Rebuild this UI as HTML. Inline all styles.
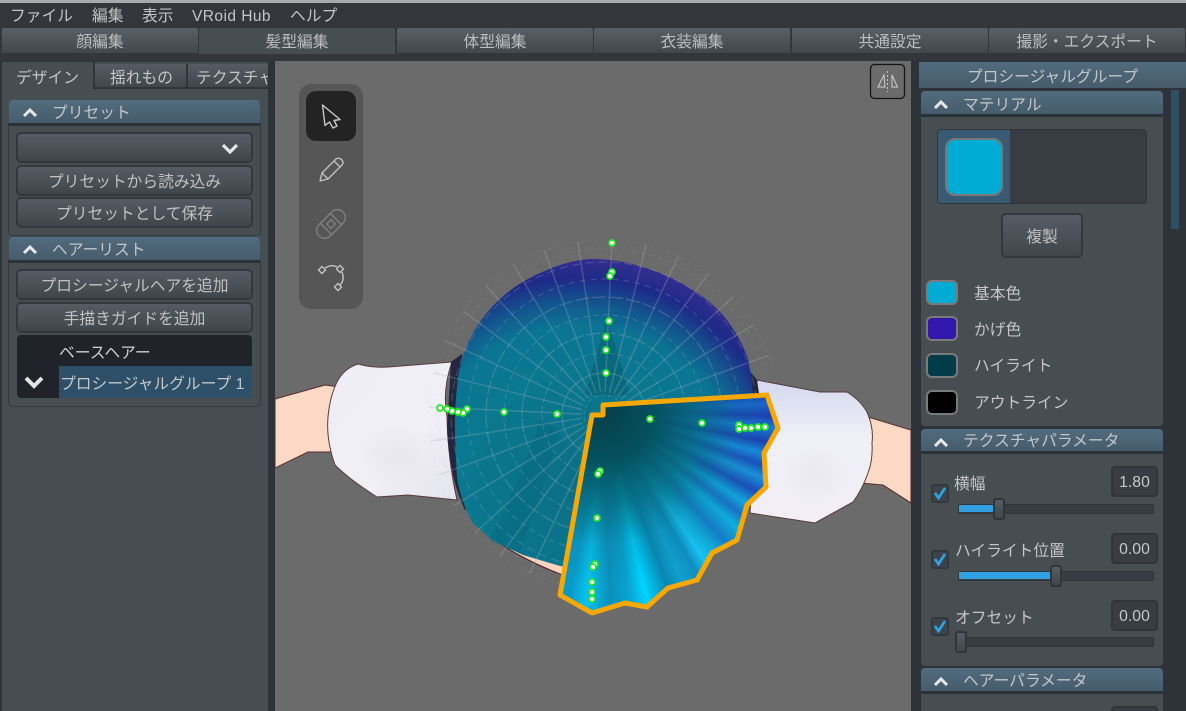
<!DOCTYPE html>
<html lang="ja"><head><meta charset="utf-8"><title>VRoid</title>
<style>
html,body{margin:0;padding:0;width:1186px;height:711px;overflow:hidden;background:#2d3338}
body{position:relative;font-family:"Liberation Sans","Noto Sans CJK JP",sans-serif;font-size:15.75px;color:#c4c6c7}
.a{position:absolute;box-sizing:border-box}
.t{position:absolute;white-space:nowrap;line-height:22px;height:22px}
.c{text-align:center}
.tab{position:absolute;top:28px;height:25px;background:linear-gradient(#585f66,#41474c);text-align:center;line-height:30px;border-radius:2px 2px 0 0;color:#bcbfc1}
.btn{position:absolute;box-sizing:border-box;background:linear-gradient(#555c64,#3f464b);border:2px solid #32383d;border-radius:5px;text-align:center;color:#c0c2c3;line-height:31px}
.hd{position:absolute;box-sizing:border-box;background:linear-gradient(#516c7e,#465c6c);border-bottom:3px solid #2c3338;border-radius:4px 4px 0 0;line-height:22px;height:26px}
.sec{position:absolute;box-sizing:border-box;background:#474e52;border:1px solid #33393e;border-radius:0 0 5px 5px}
.sw{position:absolute;left:926px;width:32px;height:25px;box-sizing:border-box;border:2px solid #7a7a7a;border-radius:6px}
.cb{position:absolute;left:931px;width:18px;height:19px;box-sizing:border-box;background:#3d434a;border:2px solid #32383d;border-radius:3px}
.inp{position:absolute;left:1111px;width:47px;height:31px;box-sizing:border-box;background:#383c43;border:2px solid #30353a;border-radius:4px;text-align:center;line-height:30px;color:#c8c9ca;font-size:15.75px}
.tr{position:absolute;left:958px;width:196px;height:10px;box-sizing:border-box;background:#383c43;border:1px solid #30353a;border-radius:2px}
.fl{position:absolute;left:959px;height:7px;background:#32a1e2}
.hn{position:absolute;width:12px;height:22px;box-sizing:border-box;background:linear-gradient(#555c64,#41474c);border:2px solid #30353a;border-radius:3px}
svg{position:absolute;overflow:visible}
.d circle{r:3px}
</style></head><body>

<div class="a" style="left:0;top:0;width:1186px;height:3px;background:#a9a9a9"></div>
<div class="a" style="left:0;top:3px;width:1186px;height:58px;background:#33373b"></div>
<div class="t" style="left:10px;top:6px">ファイル</div>
<div class="t" style="left:92px;top:6px">編集</div>
<div class="t" style="left:142px;top:6px">表示</div>
<div class="t" style="left:192px;top:6px;font-size:15.5px;letter-spacing:.45px">VRoid Hub</div>
<div class="t" style="left:290px;top:6px">ヘルプ</div>

<div class="tab" style="left:2px;width:196px">顔編集</div>
<div class="tab" style="left:199px;width:196px;height:26px;background:#474e52">髪型編集</div>
<div class="tab" style="left:397px;width:196px">体型編集</div>
<div class="tab" style="left:594px;width:196px">衣装編集</div>
<div class="tab" style="left:792px;width:196px">共通設定</div>
<div class="tab" style="left:989px;width:196px">撮影・エクスポート</div>

<!-- left panel -->
<div class="a" style="left:2px;top:62px;width:266px;height:649px;background:#474e52"></div>
<div class="a" style="left:95px;top:64px;width:91px;height:25px;background:linear-gradient(#555c64,#41474c);border-bottom:2px solid #30353a"></div>
<div class="a" style="left:188px;top:64px;width:80px;height:25px;background:linear-gradient(#555c64,#41474c);border-bottom:2px solid #30353a"></div>
<div class="a" style="left:93px;top:62px;width:2px;height:27px;background:#30353a"></div>
<div class="a" style="left:186px;top:64px;width:2px;height:25px;background:#30353a"></div>
<div class="t" style="left:16px;top:68px">デザイン</div>
<div class="t" style="left:110px;top:68px">揺れもの</div>
<div class="a" style="left:188px;top:64px;width:80px;height:24px;overflow:hidden"><div class="t" style="left:8px;top:4px">テクスチャ</div></div>

<div class="sec" style="left:8px;top:122px;width:253px;height:114px"></div>
<div class="hd" style="left:9px;top:100px;width:251px">
<div class="t" style="left:43px;top:3px">プリセット</div></div>
<svg style="left:0;top:0" width="1" height="1"><polyline points="24,116 30,110 36,116" fill="none" stroke="#e8e8e8" stroke-width="3"/></svg>
<div class="btn" style="left:16px;top:132px;width:237px;height:31px"></div>
<svg style="left:0;top:0" width="1" height="1"><polyline points="223,145 230,152 237,145" fill="none" stroke="#e4e4e4" stroke-width="3.2"/></svg>
<div class="btn" style="left:16px;top:165px;width:237px;height:31px">プリセットから読み込み</div>
<div class="btn" style="left:16px;top:197px;width:237px;height:31px">プリセットとして保存</div>

<div class="sec" style="left:8px;top:259px;width:253px;height:148px"></div>
<div class="hd" style="left:9px;top:237px;width:251px">
<div class="t" style="left:43px;top:3px">ヘアーリスト</div></div>
<svg style="left:0;top:0" width="1" height="1"><polyline points="24,253 30,247 36,253" fill="none" stroke="#e8e8e8" stroke-width="3"/></svg>
<div class="btn" style="left:16px;top:269px;width:237px;height:31px">プロシージャルヘアを追加</div>
<div class="btn" style="left:16px;top:302px;width:237px;height:31px">手描きガイドを追加</div>
<div class="a" style="left:17px;top:335px;width:235px;height:63px;background:#20242a;border-radius:4px"></div>
<div class="a" style="left:59px;top:366px;width:193px;height:32px;background:#2d5068"></div>
<div class="t" style="left:59px;top:343px;color:#d0d1d2">ベースヘアー</div>
<div class="t" style="left:60px;top:374px;color:#c6c8ca">プロシージャルグループ 1</div>
<svg style="left:0;top:0" width="1" height="1"><polyline points="26,378 34,386 42,378" fill="none" stroke="#e4e4e4" stroke-width="4"/></svg>

<!-- viewport -->
<div class="a" style="left:275px;top:61px;width:636px;height:650px;background:#6b6b6b"></div>
<div class="a" style="left:275px;top:61px;width:636px;height:650px;overflow:hidden">
<svg style="left:-275px;top:-61px" width="1186" height="711" viewBox="0 0 1186 711">
<defs>
<radialGradient id="h" gradientUnits="userSpaceOnUse" cx="578" cy="490" r="235">
<stop offset="0" stop-color="#0b6f86"/><stop offset=".5" stop-color="#0a7890"/><stop offset=".7" stop-color="#0b7594"/><stop offset=".8" stop-color="#13558e"/><stop offset=".9" stop-color="#1e2a88"/><stop offset="1" stop-color="#382e90"/>
</radialGradient>
<linearGradient id="s1" x1="0" x2="1" y1="0" y2="1"><stop offset="0" stop-color="#eeeef8"/><stop offset=".6" stop-color="#f1eff6"/><stop offset="1" stop-color="#e4e4f0"/></linearGradient>
<linearGradient id="s2" x1="0" x2="0" y1="0" y2="1"><stop offset="0" stop-color="#d4d8ee"/><stop offset=".4" stop-color="#f0f0f8"/><stop offset="1" stop-color="#f1eef5"/></linearGradient>
<filter id="b" x="-50%" y="-50%" width="200%" height="200%"><feGaussianBlur stdDeviation="9"/></filter>
</defs>
<!-- arms -->
<path d="M275 399L325 385L340 387L335 452L308 452L275 468Z" fill="#fcd9c5" stroke="#5a2a2a" stroke-width="1"/>
<path d="M862 417L868 417L911 430V503L883 485L860 483Z" fill="#fcd9c5" stroke="#5a2a2a" stroke-width="1"/>
<!-- skin under hair bottom -->
<path d="M480 528Q510 555 565 576L565 564L523 553L493 539Z" fill="#fad2bd" stroke="#4a2020" stroke-width="1"/>
<!-- sleeves -->
<path d="M358 364Q372 368 388 367L452 362Q442 390 447 417Q448 460 457 500L408 495L377 497Q350 480 335 465Q326 440 328 417Q330 395 338 380Q345 368 358 364Z" fill="url(#s1)" stroke="#5a3a3a" stroke-width="1"/>
<ellipse cx="395" cy="455" rx="24" ry="18" fill="#dcdae4" opacity=".4" filter="url(#b)"/>
<path d="M757 380L820 392L847 392Q860 400 867 412Q874 428 872 443Q873 460 868 473Q862 490 853 502L815 523L750 513Z" fill="url(#s2)" stroke="#5a3a3a" stroke-width="1"/>
<ellipse cx="815" cy="475" rx="22" ry="16" fill="#dcdae4" opacity=".35" filter="url(#b)"/>
<!-- dark hair behind -->
<path d="M462 354L451 362L447 430Q450 480 465 510L480 505L470 420Z" fill="#23263f"/>
<path d="M745 365L757 380L760 400L745 400Z" fill="#23263f"/>
<!-- hair -->
<path d="M590 259C640 258 700 285 727 320C745 345 752 365 752 385L760 460L700 560L600 570L560 566L523 555L493 541L473 523Q460 500 457 477Q453 420 457 387C460 340 490 295 540 273C560 264 575 260 590 259Z" fill="url(#h)"/>
<path d="M607 318L585 395L630 395Z" fill="#075c70" opacity=".55"/>
<path d="M490 540Q520 480 540 420L560 430Q540 500 520 552Z" fill="#06657c" opacity=".35"/>
<!-- grid -->
<g fill="none" stroke="#a8b6bc" stroke-opacity=".28">
<circle cx="604" cy="415" r="20" stroke-dasharray="4 3"/>
<circle cx="604" cy="415" r="42" stroke-width="1.3"/>
<circle cx="604" cy="415" r="62" stroke-dasharray="6 3"/>
<circle cx="604" cy="415" r="82" stroke-width="1.3" stroke-dasharray="14 2"/>
<circle cx="604" cy="415" r="100" stroke-dasharray="6 4"/>
<circle cx="604" cy="415" r="118" stroke-width="1.3" stroke-dasharray="14 3"/>
<circle cx="604" cy="415" r="136" stroke-dasharray="6 5"/>
<circle cx="604" cy="415" r="153" stroke-dasharray="8 5"/>
<circle cx="604" cy="415" r="166" stroke-dasharray="3 6" stroke-opacity=".18"/>
<circle cx="604" cy="415" r="175" stroke-dasharray="2 6" stroke-opacity=".18"/>
</g>
<g stroke="#a9b2b6" stroke-opacity=".28" stroke-width="1.5">
<line x1="604" y1="392" x2="604" y2="240" transform="rotate(2.6 604 415)"/>
<line x1="604" y1="392" x2="604" y2="240" transform="rotate(13.9 604 415)"/>
<line x1="604" y1="392" x2="604" y2="240" transform="rotate(25.1 604 415)"/>
<line x1="604" y1="392" x2="604" y2="240" transform="rotate(36.4 604 415)"/>
<line x1="604" y1="392" x2="604" y2="240" transform="rotate(47.6 604 415)"/>
<line x1="604" y1="392" x2="604" y2="240" transform="rotate(58.9 604 415)"/>
<line x1="604" y1="392" x2="604" y2="240" transform="rotate(70.1 604 415)"/>
<line x1="604" y1="392" x2="604" y2="240" transform="rotate(-8.6 604 415)"/>
<line x1="604" y1="392" x2="604" y2="240" transform="rotate(-19.9 604 415)"/>
<line x1="604" y1="392" x2="604" y2="240" transform="rotate(-31.1 604 415)"/>
<line x1="604" y1="392" x2="604" y2="240" transform="rotate(-42.4 604 415)"/>
<line x1="604" y1="392" x2="604" y2="240" transform="rotate(-53.6 604 415)"/>
<line x1="604" y1="392" x2="604" y2="240" transform="rotate(-64.9 604 415)"/>
<line x1="604" y1="392" x2="604" y2="240" transform="rotate(-76.1 604 415)"/>
<line x1="604" y1="392" x2="604" y2="240" transform="rotate(-87.4 604 415)"/>
<line x1="604" y1="392" x2="604" y2="240" transform="rotate(-98.6 604 415)"/>
<line x1="604" y1="392" x2="604" y2="240" transform="rotate(-109.9 604 415)"/>
<line x1="604" y1="392" x2="604" y2="240" transform="rotate(-121.1 604 415)"/>
<line x1="604" y1="392" x2="604" y2="240" transform="rotate(-132.4 604 415)"/>
<line x1="604" y1="392" x2="604" y2="240" transform="rotate(-143.6 604 415)"/>
<line x1="604" y1="392" x2="604" y2="240" transform="rotate(-154.9 604 415)"/>
<line x1="604" y1="392" x2="604" y2="240" transform="rotate(-166.1 604 415)"/>
</g>
</svg>
</div>

<!-- highlighted patch -->
<div class="a" style="left:0;top:0;width:1186px;height:711px;clip-path:polygon(592px 415px,603px 415px,603px 405px,767px 395px,778px 428px,764px 453px,766px 487px,747px 505px,737px 540px,712px 553px,697px 580px,668px 588px,647px 607px,625px 603px,592px 613px,560px 595px);background:radial-gradient(circle at 603px 410px,#053f49 0,#05505e 50px,rgba(6,105,125,.8) 95px,rgba(8,120,150,.25) 135px,rgba(8,130,170,0) 175px),conic-gradient(at 603px 410px,#2050c0 0deg,#2050c0 78deg,#1c3fb8 84deg,#1a66cc 88deg,#1f3ab0 92deg,#1d7ad8 96deg,#1c3cb4 101deg,#1b8ce0 105deg,#1a4ec0 109deg,#1c92dc 113deg,#1c4bb8 118deg,#12a8e0 123deg,#1a70c8 127deg,#0fb0e0 131deg,#157cc8 137deg,#10a6d8 141deg,#18c4f4 146deg,#0e8ec0 150deg,#10a0d0 155deg,#0a86b4 160deg,#00d4ff 167deg,#0aa2d0 172deg,#0c90bc 178deg,#08c4f0 185deg,#0a9ac8 190deg,#0a96c4 360deg)"></div>

<svg style="left:0;top:0" width="1186" height="711" viewBox="0 0 1186 711">
<polygon points="592,415 603,415 603,405 767,395 778,428 764,453 766,487 747,505 737,540 712,553 697,580 668,588 647,607 625,603 592,613 560,595" fill="none" stroke="#f8a800" stroke-width="5" stroke-linejoin="round"/>
<g class="d" fill="#fff" stroke="#1eea1e" stroke-width="1.7">
<circle cx="612" cy="243"/><circle cx="612" cy="272"/><circle cx="610" cy="276"/><circle cx="609" cy="321"/><circle cx="606" cy="337"/><circle cx="606" cy="350"/><circle cx="606" cy="373"/><circle cx="504" cy="412"/><circle cx="557" cy="414"/>
<circle cx="467" cy="409"/><circle cx="463" cy="413"/><circle cx="458" cy="412"/><circle cx="452" cy="411"/><circle cx="447" cy="409"/><circle cx="440" cy="408"/>
<circle cx="650" cy="419"/><circle cx="702" cy="423"/><circle cx="739" cy="425"/><circle cx="739" cy="429"/><circle cx="745" cy="428"/><circle cx="751" cy="428"/><circle cx="758" cy="427"/><circle cx="765" cy="427"/>
<circle cx="600" cy="471"/><circle cx="598" cy="474"/><circle cx="597" cy="518"/><circle cx="595" cy="564"/><circle cx="593" cy="567"/><circle cx="592" cy="582"/><circle cx="592" cy="592"/><circle cx="592" cy="599"/>
</g>
</svg>

<!-- toolbar -->
<div class="a" style="left:299px;top:84px;width:64px;height:225px;background:#565656;border-radius:12px"></div>
<div class="a" style="left:306px;top:91px;width:50px;height:50px;background:#232323;border-radius:10px"></div>
<svg style="left:0;top:0" width="1186" height="711" viewBox="0 0 1186 711">
<path d="M322.5 105L340 119.5L334 120.5L337 126L333 128L329.5 122L325 125.500Z" fill="none" stroke="#c8c8c8" stroke-width="1.4" stroke-linejoin="round"/>
<path d="M320 181L322 173L336 159Q339 157 342 160Q344 163 342 165L328 179ZM322 173L328 179M334 161L340 167" fill="none" stroke="#c0c0c0" stroke-width="1.4" stroke-linejoin="round"/>
<g transform="translate(331 224) rotate(-45)" fill="none" stroke="#7f7f7f" stroke-width="1.4">
<rect x="-17" y="-8" width="34" height="16" rx="8"/><rect x="-7" y="-8" width="14" height="16"/><rect x="-3" y="-3" width="6" height="6"/></g>
<path d="M325 268Q332 264 337 267M342 272Q345 280 340 285" fill="none" stroke="#c8c8c8" stroke-width="1.4"/>
<g fill="none" stroke="#c8c8c8" stroke-width="1.3"><rect x="319.500" y="267.500" width="5" height="5" transform="rotate(45 322 270)"/><rect x="337.500" y="266.500" width="5" height="5" transform="rotate(45 340 269)"/><rect x="335.500" y="284.500" width="5" height="5" transform="rotate(45 338 287)"/></g>
<rect x="870.500" y="64.500" width="34" height="34" rx="4" fill="none" stroke="#141414" stroke-width="1.300"/>
<path d="M884 75L878 87L885 87ZM892 75L897.500 87L892 87Z" fill="none" stroke="#cfcfcf" stroke-width="1"/>
<line x1="887.500" y1="71" x2="887.500" y2="92" stroke="#c8c8c8" stroke-dasharray="2 2"/>
</svg>

<!-- right panel -->
<div class="a" style="left:919px;top:62px;width:267px;height:26px;background:linear-gradient(#516c7e,#465c6c)"></div>
<div class="t c" style="left:919px;top:67px;width:267px">プロシージャルグループ</div>
<div class="a" style="left:1171px;top:90px;width:8px;height:139px;background:#2f5064"></div>

<div class="a" style="left:921px;top:115px;width:242px;height:311px;background:#474e52;border-radius:0 0 4px 4px"></div>
<div class="hd" style="left:921px;top:91px;width:242px"><div class="t" style="left:42px;top:4px">マテリアル</div></div>
<svg style="left:0;top:0" width="1186" height="711" viewBox="0 0 1186 711"><polyline points="935,108 941,102 947,108" fill="none" stroke="#e8e8e8" stroke-width="3"/></svg>

<div class="a" style="left:937px;top:129px;width:210px;height:75px;background:#383c43;border:1px solid #2f3439;border-radius:4px"></div>
<div class="a" style="left:938px;top:130px;width:72px;height:73px;background:#385a72;border-radius:3px 0 0 3px"></div>
<div class="a" style="left:945px;top:138px;width:58px;height:58px;background:#00acd4;border:2px solid #777;border-radius:10px"></div>
<div class="btn" style="left:1001px;top:213px;width:82px;height:45px;line-height:45px">複製</div>

<div class="sw" style="top:280px;background:#00acd4"></div>
<div class="sw" style="top:316px;background:#3218aa"></div>
<div class="sw" style="top:353px;background:#023c48"></div>
<div class="sw" style="top:390px;background:#000"></div>
<div class="t" style="left:974px;top:284px">基本色</div>
<div class="t" style="left:974px;top:320px">かげ色</div>
<div class="t" style="left:974px;top:356px">ハイライト</div>
<div class="t" style="left:974px;top:393px">アウトライン</div>

<div class="a" style="left:921px;top:452px;width:242px;height:214px;background:#474e52;border-radius:0 0 4px 4px"></div>
<div class="hd" style="left:921px;top:429px;width:242px;height:25px"><div class="t" style="left:42px;top:2px">テクスチャパラメータ</div></div>
<svg style="left:0;top:0" width="1186" height="711" viewBox="0 0 1186 711"><polyline points="935,446 941,440 947,446" fill="none" stroke="#e8e8e8" stroke-width="3"/></svg>

<div class="t" style="left:954px;top:474px">横幅</div>
<div class="t" style="left:955px;top:541px">ハイライト位置</div>
<div class="t" style="left:955px;top:608px">オフセット</div>
<div class="inp" style="top:466px">1.80</div>
<div class="inp" style="top:533px">0.00</div>
<div class="inp" style="top:600px">0.00</div>
<div class="tr" style="top:504px"></div>
<div class="tr" style="top:571px"></div>
<div class="tr" style="top:637px"></div>
<div class="fl" style="top:505px;width:35px"></div>
<div class="fl" style="top:572px;width:92px"></div>
<div class="hn" style="left:993px;top:498px"></div>
<div class="hn" style="left:1050px;top:565px"></div>
<div class="hn" style="left:955px;top:631px"></div>
<div class="cb" style="top:484px"></div>
<div class="cb" style="top:550px"></div>
<div class="cb" style="top:617px"></div>
<svg style="left:0;top:0" width="1186" height="711" viewBox="0 0 1186 711">
<g fill="none" stroke="#2fa3e6" stroke-width="2.600">
<polyline points="935,493 938.500,498 945,488"/><polyline points="935,559 938.500,564 945,554"/><polyline points="935,626 938.500,631 945,621"/></g>
</svg>

<div class="a" style="left:921px;top:692px;width:242px;height:19px;background:#474e52"></div>
<div class="hd" style="left:921px;top:668px;width:242px;height:26px"><div class="t" style="left:42px;top:3px">ヘアーパラメータ</div></div>
<svg style="left:0;top:0" width="1186" height="711" viewBox="0 0 1186 711"><polyline points="935,685 941,679 947,685" fill="none" stroke="#e8e8e8" stroke-width="3"/></svg>
<div class="a" style="left:1111px;top:706px;width:47px;height:5px;background:#383c43;border:2px solid #30353a;border-bottom:0;border-radius:4px 4px 0 0"></div>

</body></html>
